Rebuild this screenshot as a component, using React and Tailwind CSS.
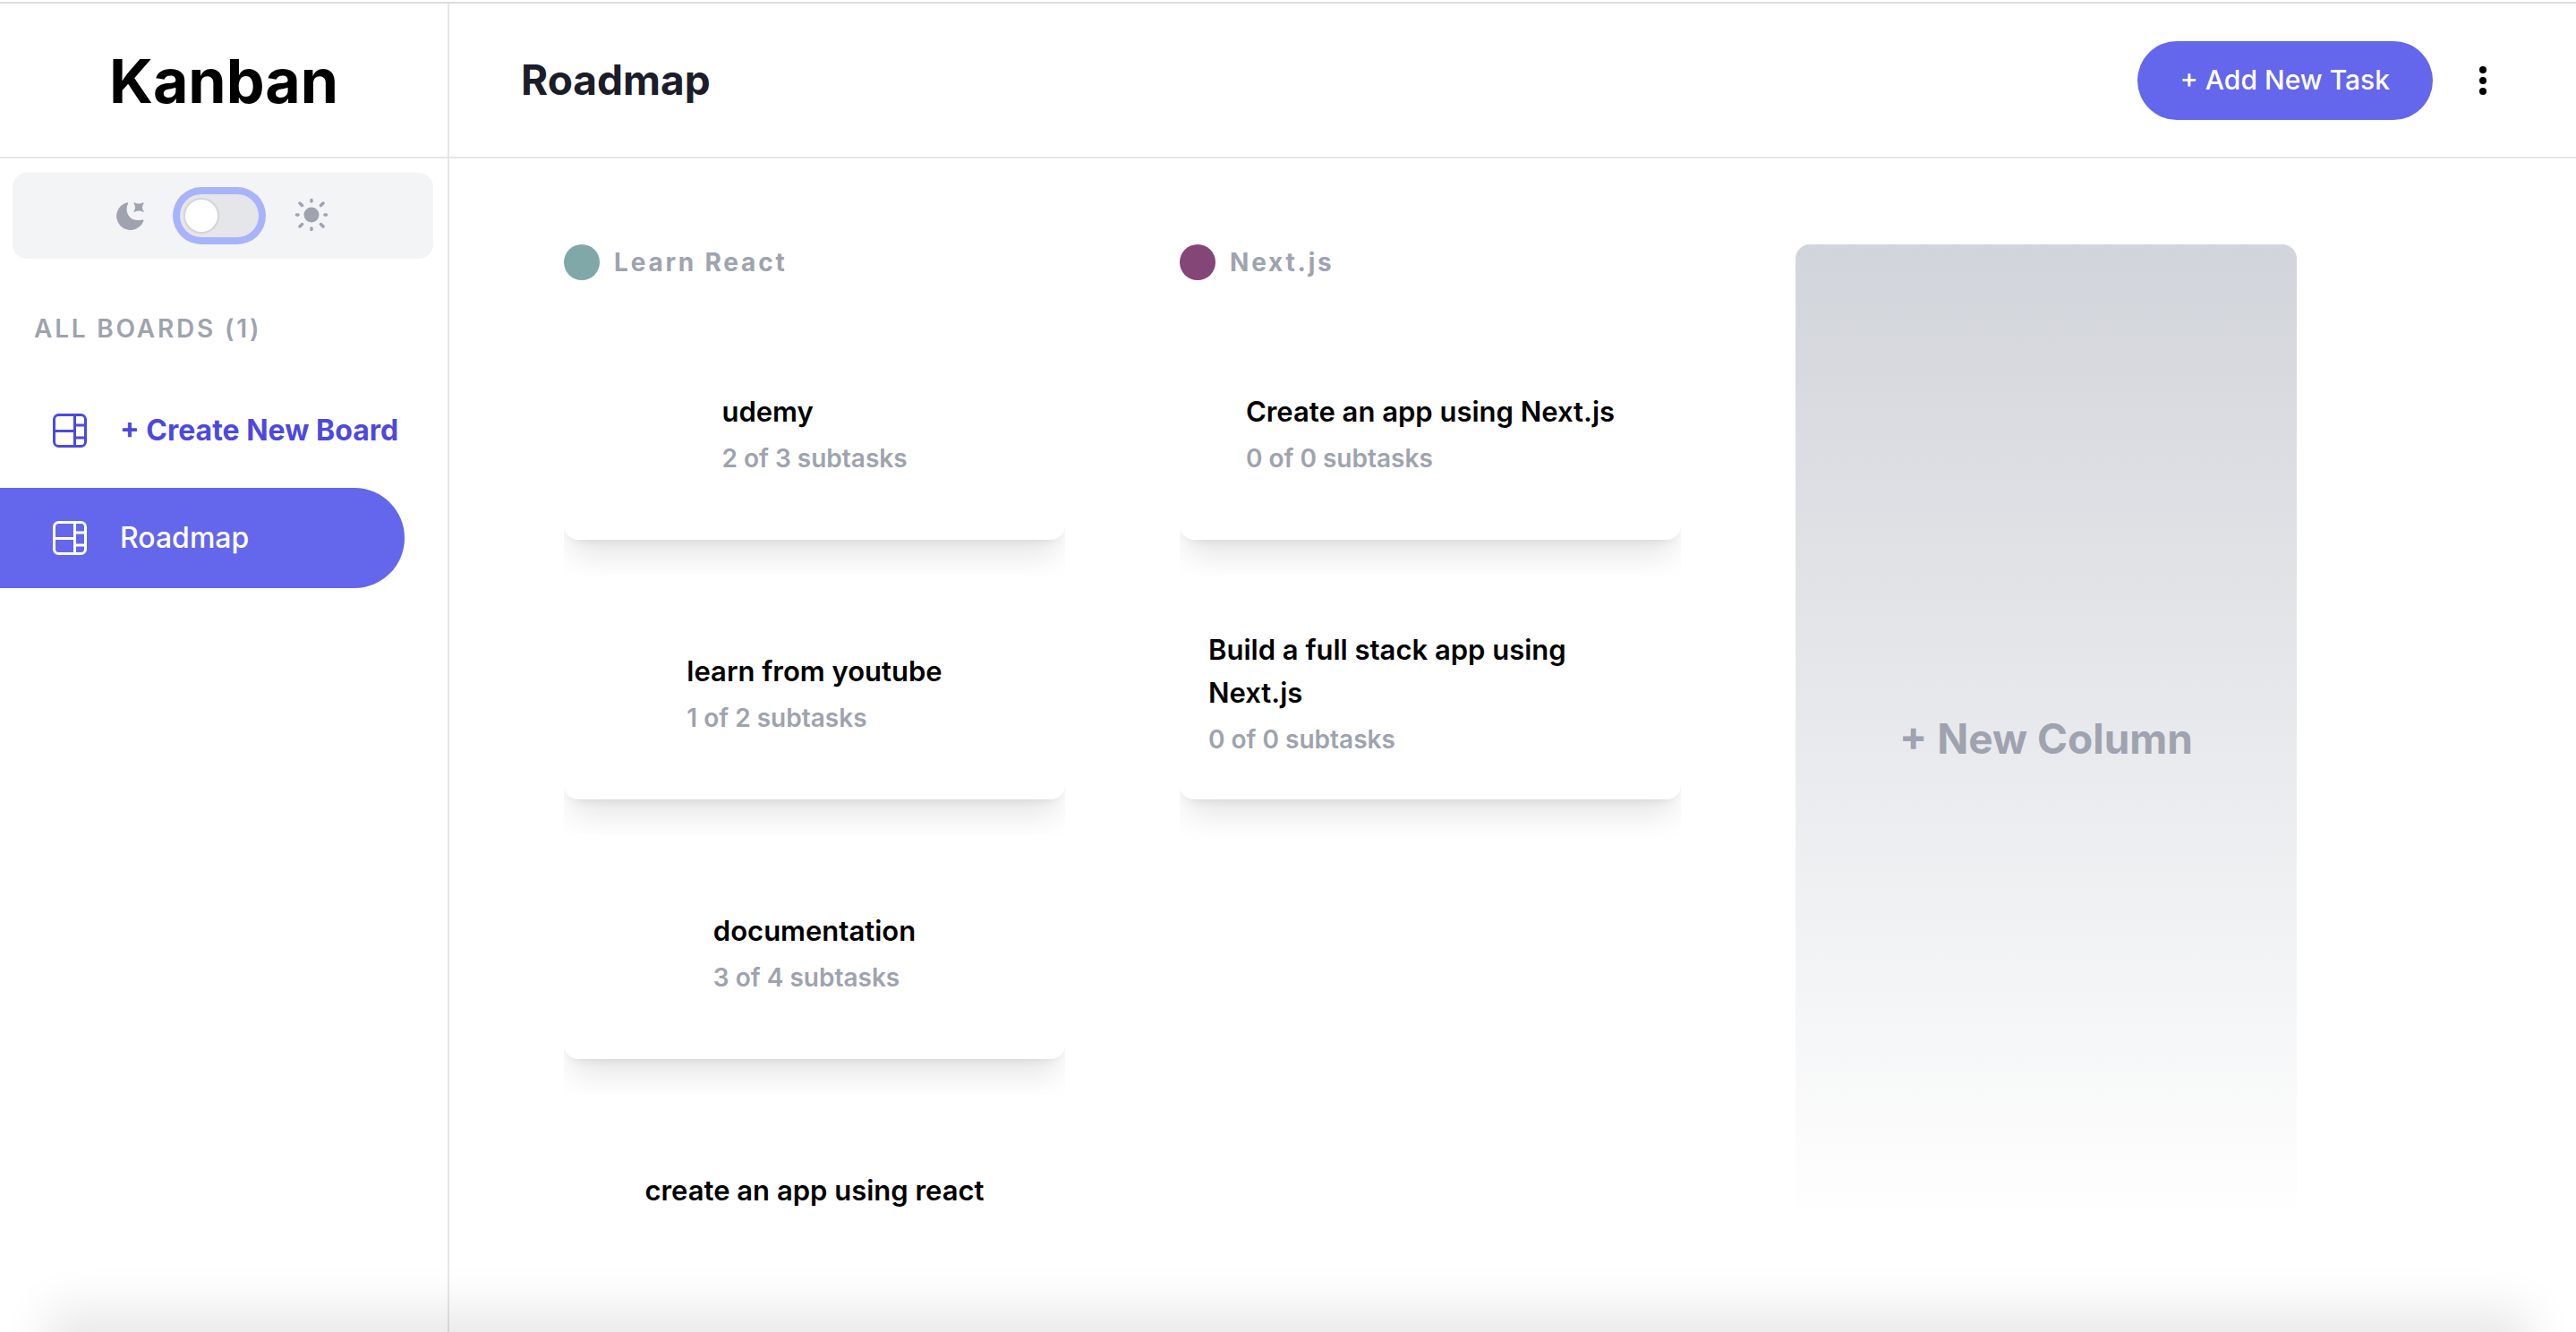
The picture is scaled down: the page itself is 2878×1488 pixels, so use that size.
const columns = [
  {
    name: "Learn React",
    dot: "bg-[#81a8a8]",
    tasks: [
      { title: "udemy", done: 2, total: 3 },
      { title: "learn from youtube", done: 1, total: 2 },
      { title: "documentation", done: 3, total: 4 },
      { title: "create an app using react", done: 0, total: 0 },
    ],
  },
  {
    name: "Next.js",
    dot: "bg-[#844676]",
    tasks: [
      { title: "Create an app using Next.js", done: 0, total: 0 },
      { title: "Build a full stack app using Next.js", done: 0, total: 0 },
    ],
  },
];

function BoardIcon() {
  return (
    <svg className="size-10 shrink-0" viewBox="0 0 40 40" fill="none" stroke="currentColor" strokeWidth="3" aria-hidden="true">
      <rect x="2.5" y="2.5" width="35" height="35" rx="5" />
      <path d="M25.5 2.5v35M2.5 20.5h23M25.5 14h12M25.5 28h12" />
    </svg>
  );
}

function MoonIcon() {
  return (
    <svg className="size-8" viewBox="0 0 32 32" fill="currentColor" aria-hidden="true">
      <path d="M13 1.2a1 1 0 0 1 1 1.4C9.500 12 16 24 30 20.500a1 1 0 0 1 1.300 1.400A15.600 15.600 0 1 1 13 1.200Z" />
      <path d="M21.200 1.200Q26 4 30.800 1.200Q32 1 31.500 2.200Q28.500 6.500 31.500 10.800Q32 12.200 30.800 11.800Q26 9 21.400 11.800Q20 12.200 20.600 10.800Q23.500 6.500 20.500 2.200Q20 1 21.200 1.200Z" />
    </svg>
  );
}

function SunIcon() {
  return (
    <svg className="size-10" viewBox="1 1 40 40" aria-hidden="true">
      <circle cx="20" cy="20" r="8.5" fill="currentColor" />
      <path
        d="M20 3.500v1.500M20 35v1.500M3.500 20h1.500M35 20h1.500M7 7l2.500 2.500M30.500 30.500l2.500 2.500M7 33l2.500-2.500M30.500 9.500l2.500-2.500"
        stroke="currentColor"
        strokeWidth="3.500"
        strokeLinecap="round"
      />
    </svg>
  );
}

function Sidebar() {
  return (
    <aside className="flex w-[502px] shrink-0 flex-col border-r-2 border-[#e5e6ea]">
      <div className="flex h-[173px] items-center justify-center border-b-2 border-[#e5e6ea]">
        <span className="text-[68px] font-bold text-black">Kanban</span>
      </div>
      <div className="mt-4 mr-4 ml-3.5 flex h-24 items-center justify-center gap-10 rounded-2xl bg-[#f2f4f6] text-[#9ea3af]">
        <MoonIcon />
        <label className="flex cursor-pointer">
          <input type="checkbox" aria-label="Light mode" className="peer sr-only" />
          <span className="h-12 w-[88px] rounded-full bg-[#e5e6ea] p-1 ring-8 ring-[#a9b3f9] peer-checked:*:translate-x-10">
            <span className="block size-10 rounded-full border-2 border-[#d2d5da] bg-white" />
          </span>
        </label>
        <SunIcon />
      </div>
      <h2 className="mt-14 ml-[38px] text-[28px] leading-11 font-semibold tracking-widest text-[#9ea3af]">ALL BOARDS (1)</h2>
      <nav className="mt-9 flex flex-col gap-2">
        <button type="button" className="flex h-28 items-center gap-9 pl-[58px] text-[32px] font-bold whitespace-nowrap text-[#4d49de]">
          <BoardIcon />
          + Create New Board
        </button>
        <button type="button" className="mr-12 flex h-28 items-center gap-9 rounded-r-full bg-[#6466ec] pl-[58px] text-[32px] font-medium text-white">
          <BoardIcon />
          Roadmap
        </button>
      </nav>
    </aside>
  );
}

function TaskCard({ task }) {
  return (
    <li className="flex h-[250px] shrink-0 items-center justify-center rounded-2xl bg-white px-8 pt-3 shadow-[0_24px_36px_-8px_rgb(0_0_0/0.11),0_8px_12px_-8px_rgb(0_0_0/0.1)]">
      <div>
        <h4 className="text-[31px] leading-12 font-semibold text-black">{task.title}</h4>
        <p className="mt-2 text-[28px] leading-10 font-semibold text-[#9ea3af]">
          {task.done} of {task.total} subtasks
        </p>
      </div>
    </li>
  );
}

export default function App() {
  return (
    <div className="relative flex h-screen flex-col overflow-hidden bg-white pt-0.5 font-['Inter',sans-serif]">
      <div className="flex min-h-0 flex-1 border-t-2 border-[#dcdcde]">
        <Sidebar />
        <div className="flex min-w-0 flex-1 flex-col">
          <header className="flex h-[173px] shrink-0 items-center border-b-2 border-[#e5e6ea] pr-22 pl-20">
            <h1 className="text-[46px] font-bold text-[#1b1d2a]">Roadmap</h1>
            <button type="button" className="ml-auto h-[88px] rounded-full bg-[#6466ec] px-12 text-[30px] font-medium text-white">
              + Add New Task
            </button>
            <button type="button" aria-label="Board options" className="ml-10 flex h-12 w-8 items-center justify-center">
              <svg className="h-8 w-2" viewBox="0 0 8 32" aria-hidden="true">
                <circle cx="4" cy="4" r="4" />
                <circle cx="4" cy="16" r="4" />
                <circle cx="4" cy="28" r="4" />
              </svg>
            </button>
          </header>
          <main className="mb-[119px] flex min-h-0 flex-1 gap-32 pt-24 pl-32">
            {columns.map((column) => (
              <section key={column.name} className="flex w-[560px] shrink-0 flex-col">
                <h3 className="flex h-10 shrink-0 items-center gap-4 text-[28px] font-bold tracking-widest text-[#9ea3af]">
                  <span className={`size-10 rounded-full ${column.dot}`} />
                  {column.name}
                </h3>
                <ul className="flex min-h-0 flex-1 flex-col gap-10 overflow-hidden pt-10">
                  {column.tasks.map((task) => (
                    <TaskCard key={task.title} task={task} />
                  ))}
                </ul>
              </section>
            ))}
            <button type="button" className="w-[560px] shrink-0 rounded-2xl bg-linear-to-b from-[#d1d4da] to-white pt-2 text-[46px] font-bold text-[#9ea3af]">
              + New Column
            </button>
          </main>
        </div>
      </div>
      <div className="pointer-events-none absolute inset-x-[52px] top-full h-24 shadow-[0_-26px_52px_rgb(0_0_0/0.09)]" />
    </div>
  );
}
